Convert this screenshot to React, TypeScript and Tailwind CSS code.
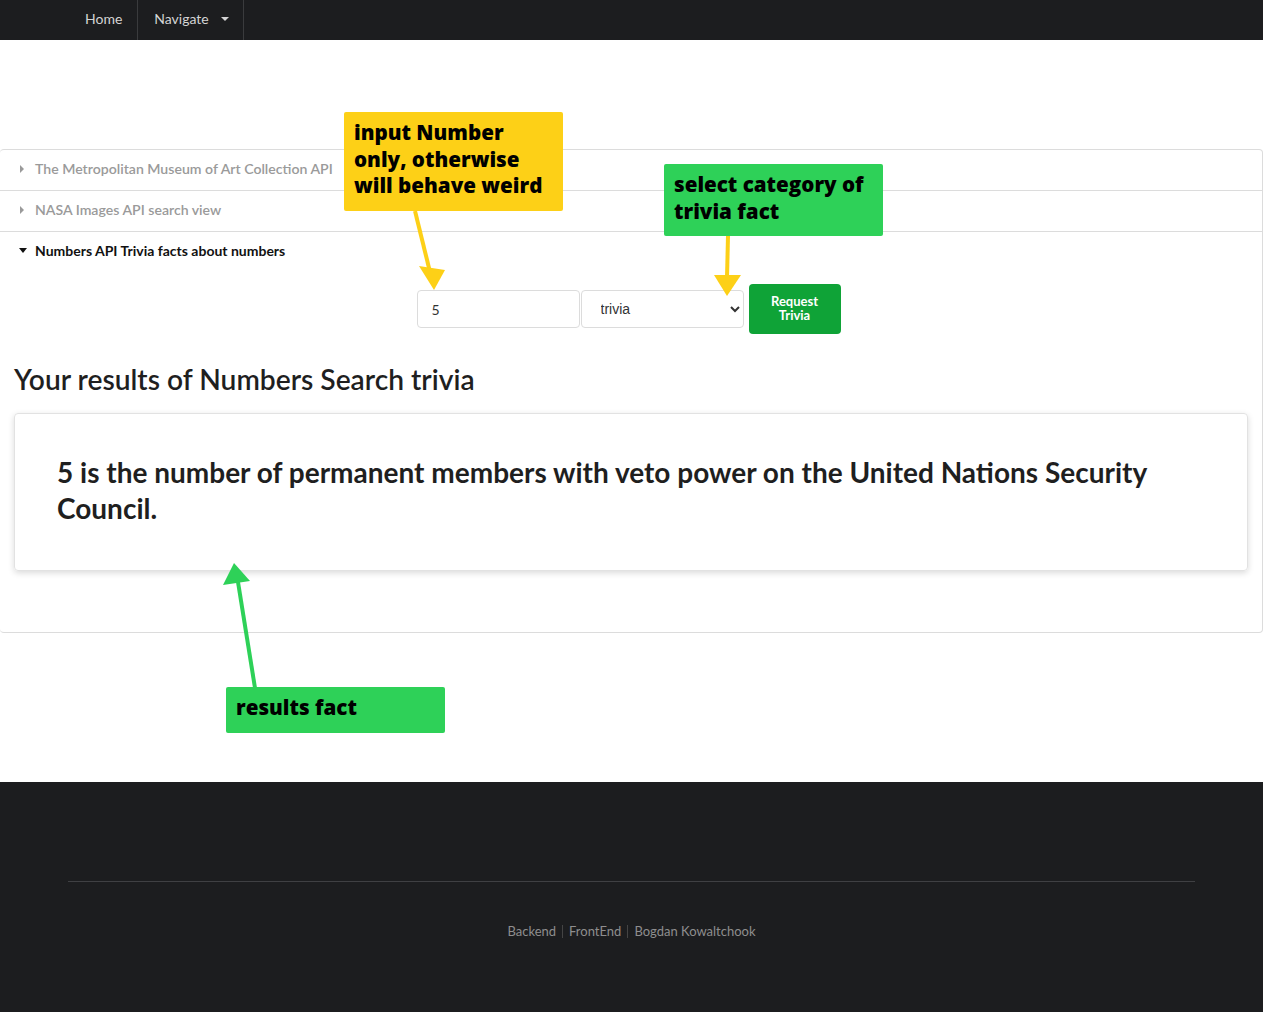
import { useState } from "react"

const sections = [
  { title: "The Metropolitan Museum of Art Collection API", open: false },
  { title: "NASA Images API search view", open: false },
  { title: "Numbers API Trivia facts about numbers", open: true },
]

function Note({ text, color, className }: { text: string[]; color: string; className: string }) {
  return (
    <div
      className={`absolute rounded-[2px] px-[10px] text-[20.6px] leading-[26.5px] font-extrabold text-black ${color} ${className}`}
      style={{ fontFamily: '"Open Sans", sans-serif' }}
    >
      {text.map((t) => (
        <div key={t}>{t}</div>
      ))}
    </div>
  )
}

export default function App() {
  const [num, setNum] = useState("5")
  const [kind, setKind] = useState("trivia")

  return (
    <div className="relative min-h-[1012px] bg-white" style={{ fontFamily: "Lato, sans-serif" }}>
      {/* top bar */}
      <nav className="flex h-10 items-stretch bg-[#1c1d1f] pl-[68px] text-[14px] text-[#d4d4d4]">
        <a className="flex items-center border-r border-[#3a3b3d] pr-[15px] pl-[17px] pb-[3px]">Home</a>
        <a className="flex items-center gap-[12px] border-r border-[#3a3b3d] pl-[16px] pr-[14px] pb-[3px]">
          Navigate
          <span className="mt-[1px] h-0 w-0 border-x-[4px] border-t-[4px] border-x-transparent border-t-[#d4d4d4]" />
        </a>
      </nav>

      <main className="pt-[109px] pb-[149px]">
        <div className="rounded-[4px] border-y border-r border-[#dcdcdc]">
          {sections.map((s, i) => (
            <div key={s.title} className={i > 0 ? "border-t border-[#dcdcdc]" : ""}>
              <div
                className={`flex h-[40px] items-center pb-[3px] pl-[19px] ${
                  s.open ? "text-[14px] font-bold text-[#111]" : "text-[14.1px] font-semibold text-[#9a9a9a]"
                }`}
              >
                {s.open ? (
                  <span className="mr-[8px] h-0 w-0 border-x-[4px] border-t-[5px] border-x-transparent border-t-[#111]" />
                ) : (
                  <span className="mr-[11px] ml-[1px] h-0 w-0 border-y-[4px] border-l-[4px] border-y-transparent border-l-[#9a9a9a]" />
                )}
                {s.title}
              </div>
              {s.open && (
                <div className="px-[14px] pt-[12px] pb-[61px]">
                  <div className="flex items-center justify-center pr-[5px]">
                    <input
                      value={num}
                      onChange={(e) => setNum(e.target.value)}
                      className="h-[38px] w-[163px] rounded-[4px] border border-[#dcdcdc] px-[14px] text-[14px] text-[#333] outline-none"
                    />
                    <select
                      value={kind}
                      onChange={(e) => setKind(e.target.value)}
                      className="ml-[1px] h-[38px] w-[163px] rounded-[4px] border border-[#dcdcdc] bg-white pl-[15px] pr-[2px] text-[14px] text-[#333]"
                      style={{ fontFamily: '"Liberation Sans", Arial, sans-serif' }}
                    >
                      <option value="trivia">trivia</option>
                      <option value="math">math</option>
                      <option value="date">date</option>
                      <option value="year">year</option>
                    </select>
                    <button className="ml-[5px] h-[50px] w-[92px] rounded-[4px] bg-[#0fa337] pb-[2px] text-[13px] leading-[14px] font-bold text-white">
                      Request
                      <br />
                      Trivia
                    </button>
                  </div>

                  <h2 className="mt-[28px] text-[28.2px] leading-[34px] font-semibold text-[#1f1f1f]">
                    Your results of Numbers Search trivia
                  </h2>

                  <div className="mt-[17px] rounded-[4px] border border-[#e2e2e2] px-[42px] pt-[40px] pb-[44px] shadow-[0_2px_6px_rgba(0,0,0,0.15)]">
                    <p className="text-[28px] leading-[36px] font-bold text-[#1f1f1f]">
                      5 is the number of permanent members with veto power on the United Nations Security Council.
                    </p>
                  </div>
                </div>
              )}
            </div>
          ))}
        </div>
      </main>

      {/* footer */}
      <footer className="h-[230px] bg-[#1c1d1f] px-[68px] pt-[99px]">
        <div className="border-t border-[#3f4043]" />
        <div className="mt-[40px] flex items-center justify-center text-[13px] text-[#8e8e8e]">
          <a>Backend</a>
          <span className="mx-[6px] h-[13px] w-px bg-[#444]" />
          <a>FrontEnd</a>
          <span className="mx-[6px] h-[13px] w-px bg-[#444]" />
          <a>Bogdan Kowaltchook</a>
        </div>
      </footer>

      {/* annotations */}
      <svg className="pointer-events-none absolute top-0 left-0" width="1263" height="1012">
        <line x1="415" y1="211" x2="430" y2="272" stroke="#fdd017" strokeWidth="4" />
        <polygon points="419,266 445,270 434,290" fill="#fdd017" />
        <line x1="728" y1="236" x2="727" y2="278" stroke="#fdd017" strokeWidth="4" />
        <polygon points="714,275 741,275 727,296" fill="#fdd017" />
        <line x1="255" y1="688" x2="238" y2="582" stroke="#2ed158" strokeWidth="4" />
        <polygon points="223,585 250,581 234,563" fill="#2ed158" />
      </svg>
      <Note
        text={["input Number", "only, otherwise", "will behave weird"]}
        color="bg-[#fdd017]"
        className="top-[112px] left-[344px] h-[99px] w-[219px] pt-[7px]"
      />
      <Note
        text={["select category of", "trivia fact"]}
        color="bg-[#2ed158]"
        className="top-[164px] left-[664px] h-[72px] w-[219px] pt-[7px]"
      />
      <Note
        text={["results fact"]}
        color="bg-[#2ed158]"
        className="top-[687px] left-[226px] h-[46px] w-[219px] pt-[7px]"
      />
    </div>
  )
}
